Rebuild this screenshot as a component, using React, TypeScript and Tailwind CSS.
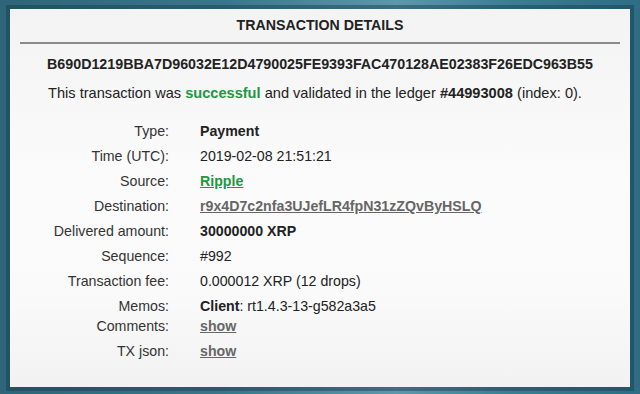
import React from "react";

interface Row {
  label: string;
  value: React.ReactNode;
  short?: boolean;
}

const rows: Row[] = [
  { label: "Type:", value: <span className="font-bold">Payment</span> },
  { label: "Time (UTC):", value: "2019-02-08 21:51:21" },
  {
    label: "Source:",
    value: <a className="font-bold text-[#21983f] underline">Ripple</a>,
  },
  {
    label: "Destination:",
    value: (
      <a className="font-bold text-[#666666] underline">r9x4D7c2nfa3UJefLR4fpN31zZQvByHSLQ</a>
    ),
  },
  { label: "Delivered amount:", value: <span className="font-bold">30000000 XRP</span> },
  { label: "Sequence:", value: "#992" },
  { label: "Transaction fee:", value: "0.000012 XRP (12 drops)" },
  {
    label: "Memos:",
    value: (
      <>
        <span className="font-bold">Client</span>: rt1.4.3-13-g582a3a5
      </>
    ),
    short: true,
  },
  { label: "Comments:", value: <a className="font-bold text-[#666666] underline">show</a> },
  { label: "TX json:", value: <a className="font-bold text-[#666666] underline">show</a> },
];

export default function App() {
  return (
    <div
      className="flex h-[394px] w-[640px] bg-[linear-gradient(90deg,#2e6578_0%,#3a768b_35%,#5d97ab_62%,#3c7d94_80%,#2e6d84_100%)] pt-[9px] pr-[10px] pb-[7px] pl-[10px] text-[14.2px] text-[#222222]"
      style={{ fontFamily: '"Liberation Sans", Arial, sans-serif' }}
    >
      <div className="flex flex-1 flex-col bg-[linear-gradient(180deg,#f3f3f3_0%,#fbfbfb_45%,#fafafa_75%,#f2f2f2_100%)] shadow-[0_0_0_4px_rgba(20,60,75,0.45)]">
        <div className="flex h-[33px] items-center justify-center pt-[1px] font-bold text-[#222222]">
          TRANSACTION DETAILS
        </div>
        <div className="mx-[10px] h-[2px] bg-[#8a8a8a]" />

        <div className="mt-[10px] text-center text-[14.25px] font-bold leading-[20px]">
          B690D1219BBA7D96032E12D4790025FE9393FAC470128AE02383F26EDC963B55
        </div>
        <div className="mt-[9px] pr-[10px] text-center text-[14.6px] leading-[20px]">
          This transaction was <span className="font-bold text-[#21983f]">successful</span> and
          validated in the ledger <span className="font-bold">#44993008</span> (index: 0).
        </div>

        <div className="mt-[16px] flex flex-col">
          {rows.map((r) => (
            <div
              key={r.label}
              className={`flex leading-[25px] ${r.short ? "h-[20px]" : "h-[25px]"}`}
            >
              <div className="w-[159px] shrink-0 text-right text-[#333333]">{r.label}</div>
              <div className="ml-[31px]">{r.value}</div>
            </div>
          ))}
        </div>
      </div>
    </div>
  );
}
